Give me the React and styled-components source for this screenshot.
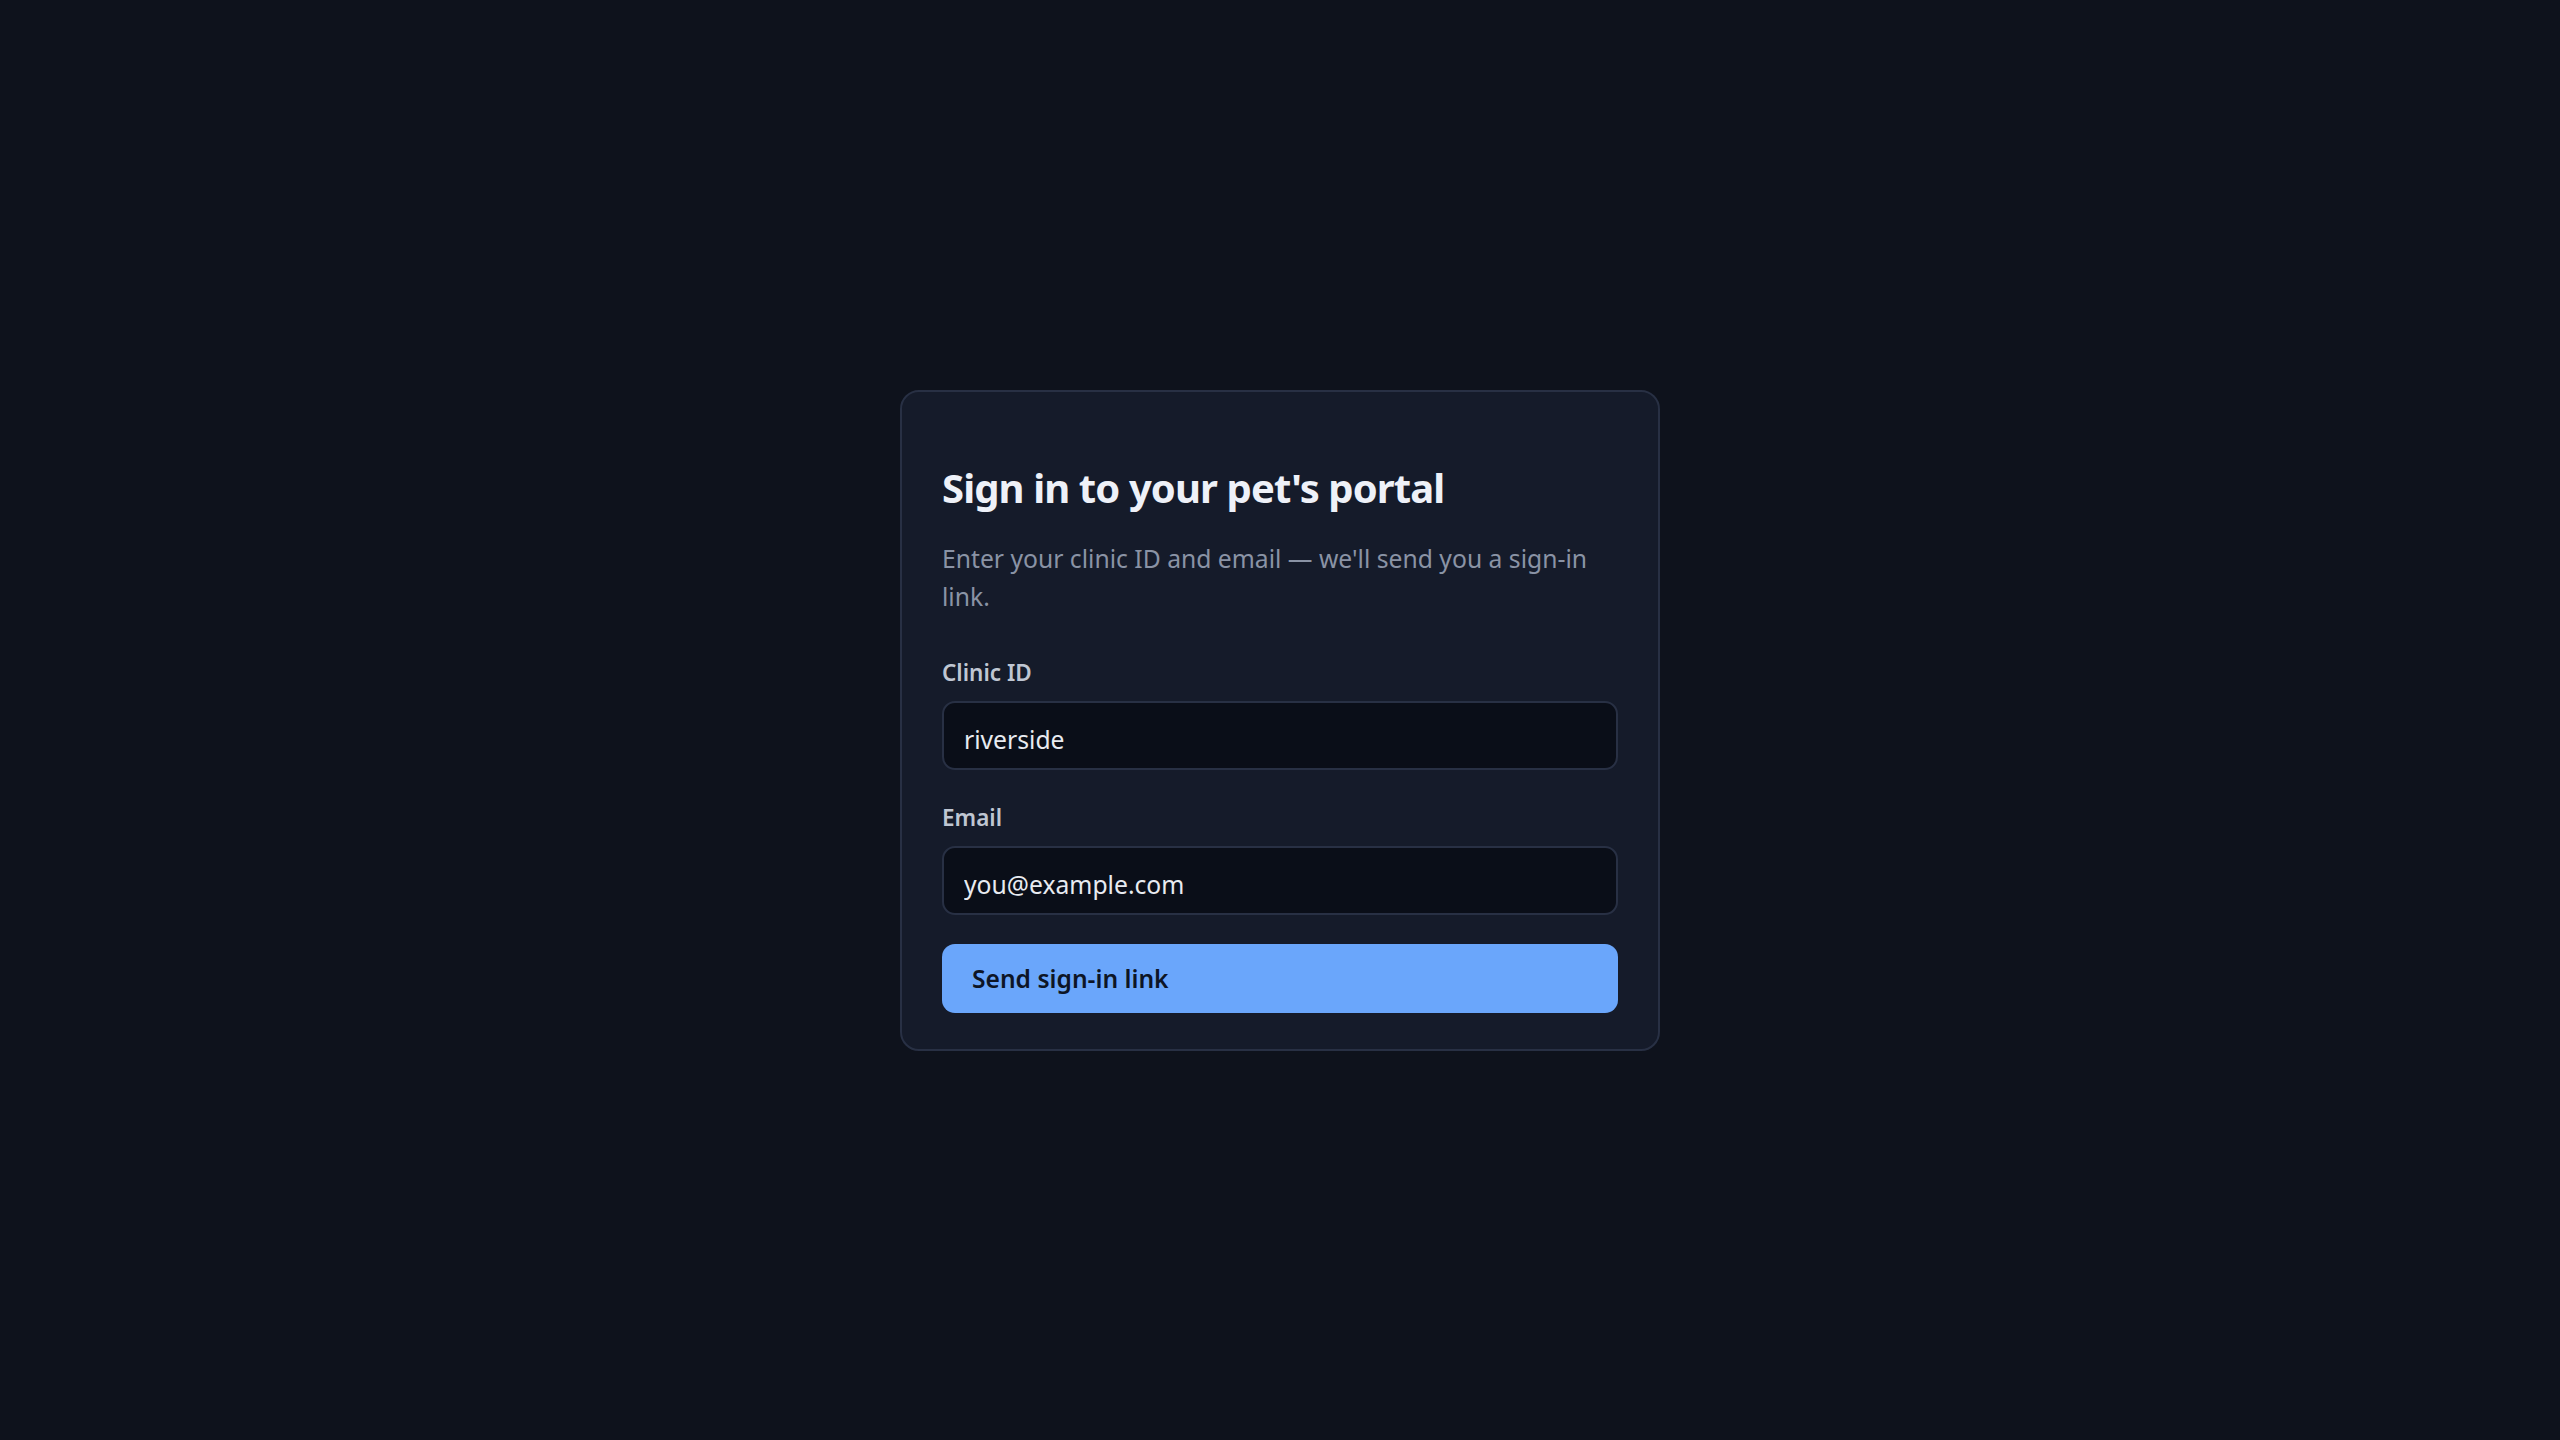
import React from 'react';
import styled, { createGlobalStyle } from 'styled-components';

const COLORS = {
  page: '#0e121c',
  card: '#151b2a',
  border: '#283044',
  title: '#eef1f8',
  muted: '#8a93a5',
  label: '#bfc6d2',
  field: '#0a0e18',
  text: '#e8ebf1',
  accent: '#6aa6fb',
  accentText: '#0d1526',
};

const GlobalStyle = createGlobalStyle`
  * { box-sizing: border-box; }
  html, body {
    margin: 0;
    background: ${COLORS.page};
    font-family: "Noto Sans", Lato, "Liberation Sans", sans-serif;
  }
`;

const Page = styled.main`
  min-height: 100vh;
  display: flex;
  align-items: center;
  justify-content: center;
`;

const Card = styled.section`
  width: 760px;
  background: ${COLORS.card};
  border: 2px solid ${COLORS.border};
  border-radius: 19px;
  padding: 40px 40px 36px;
`;

const Title = styled.h1`
  margin: 32px 0 28px;
  font-size: 40px;
  line-height: 48px;
  font-weight: 700;
  letter-spacing: -0.9px;
  color: ${COLORS.title};
`;

const Subtitle = styled.p`
  margin: 0 0 42px;
  font-size: 24.7px;
  line-height: 38px;
  color: ${COLORS.muted};
`;

const Form = styled.form`
  display: flex;
  flex-direction: column;
  gap: 29px;
`;

const Fields = styled.div`
  display: flex;
  flex-direction: column;
  gap: 33px;
`;

const Field = styled.label`
  display: flex;
  flex-direction: column;
  gap: 13px;
`;

const LabelText = styled.span`
  font-size: 22.5px;
  line-height: 30px;
  font-weight: 600;
  color: ${COLORS.label};
`;

const Input = styled.input`
  width: 100%;
  height: 69px;
  padding: 24px 20px 16px;
  background: ${COLORS.field};
  border: 2px solid ${COLORS.border};
  border-radius: 13px;
  color: ${COLORS.text};
  font-family: inherit;
  font-size: 24.7px;
  line-height: 1;
  outline: none;
`;

const Button = styled.button`
  width: 100%;
  height: 69px;
  padding: 0 30px;
  border: none;
  border-radius: 13px;
  background: ${COLORS.accent};
  color: ${COLORS.accentText};
  font-family: inherit;
  font-size: 24.6px;
  font-weight: 600;
  text-align: left;
  cursor: pointer;
`;

export default function App() {
  return (
    <>
      <GlobalStyle />
      <Page>
        <Card>
          <Title>Sign in to your pet's portal</Title>
          <Subtitle>
            Enter your clinic ID and email — we'll send you a sign-in link.
          </Subtitle>
          <Form onSubmit={(e) => e.preventDefault()}>
            <Fields>
              <Field>
                <LabelText>Clinic ID</LabelText>
                <Input type="text" defaultValue="riverside" />
              </Field>
              <Field>
                <LabelText>Email</LabelText>
                <Input type="email" defaultValue="you@example.com" />
              </Field>
            </Fields>
            <Button type="submit">Send sign-in link</Button>
          </Form>
        </Card>
      </Page>
    </>
  );
}
